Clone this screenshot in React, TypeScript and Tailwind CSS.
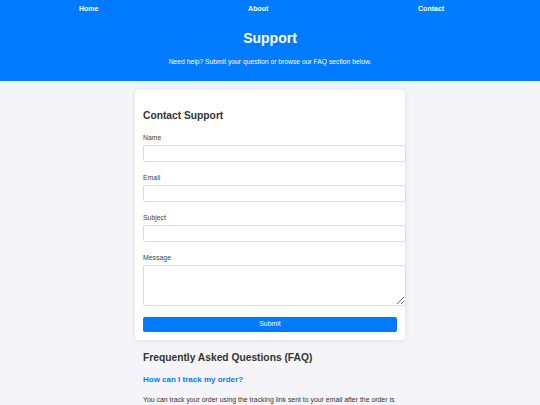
const fields = [
  { label: 'Name', type: 'text' },
  { label: 'Email', type: 'email' },
  { label: 'Subject', type: 'text' },
];

export default function App() {
  return (
    <div className="min-h-[405px] bg-[#f4f4f9] font-['Liberation_Sans',Arial,sans-serif] text-[#333]">
      <header className="bg-[#007bff] text-white text-center pb-[15px]">
        <nav className="flex justify-around items-center h-[18px] pl-[4px] pr-[21px] text-[7px] font-bold">
          <a href="#">Home</a>
          <a href="#">About</a>
          <a href="#">Contact</a>
        </nav>
        <h1 className="mt-[12px] text-[14px] leading-[16px] font-bold">Support</h1>
        <p className="mt-[12px] text-[6.75px] leading-[8px]">Need help? Submit your question or browse our FAQ section below.</p>
      </header>

      <main className="w-[270px] mx-auto">
        <div className="mt-[9px] bg-white rounded-[4px] shadow-[0_1px_5px_rgba(0,0,0,0.1)] px-[8px] pt-[8px] pb-[8.5px]">
          <h2 className="mt-[12px] text-[10.25px] leading-[12px] font-bold">Contact Support</h2>
          <form onSubmit={e => e.preventDefault()}>
            {fields.map(f => (
              <div key={f.label} className="mt-[12px]">
                <label className="block text-[6.9px] leading-[8px] mb-[3px] text-[#444]">{f.label}</label>
                <input type={f.type} className="block w-[263px] h-[17px] border border-[#ddd] rounded-[2px] bg-white" />
              </div>
            ))}
            <div className="mt-[12px]">
              <label className="block text-[6.9px] leading-[8px] mb-[3px] text-[#444]">Message</label>
              <textarea className="block w-[263px] h-[41px] border border-[#ddd] rounded-[2px] bg-white" />
            </div>
            <button type="submit" className="mt-[10.5px] block w-full h-[15px] bg-[#007bff] text-white text-[6.9px] rounded-[2px]">
              Submit
            </button>
          </form>
        </div>

        <section className="px-[8px]">
          <h2 className="mt-[12px] text-[10.25px] leading-[12px] font-bold">Frequently Asked Questions (FAQ)</h2>
          <h3 className="mt-[11px] text-[8px] leading-[10px] font-bold text-[#007bff]">How can I track my order?</h3>
          <p className="mt-[10px] text-[6.9px] leading-[10px] text-[#333]">
            You can track your order using the tracking link sent to your email after the order is shipped.
          </p>
        </section>
      </main>
    </div>
  );
}
